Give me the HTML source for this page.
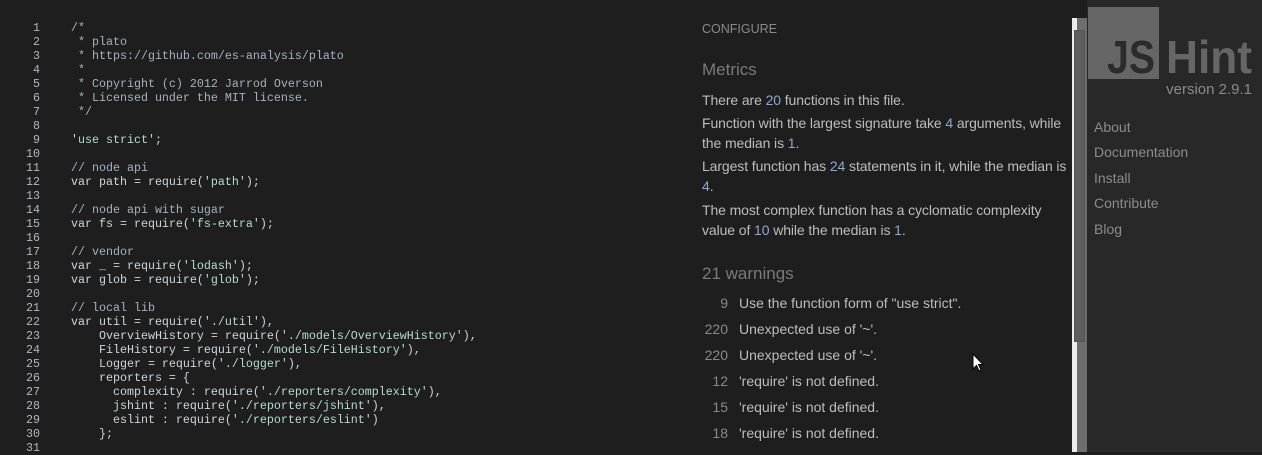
<!DOCTYPE html>
<html><head><meta charset="utf-8"><style>
*{margin:0;padding:0;box-sizing:border-box}
body{width:1262px;height:452px;overflow:hidden;background:#1e1e1e;position:relative;font-family:"Liberation Sans",sans-serif}
#code{position:absolute;left:0;top:21px;font-family:"Liberation Mono",monospace;font-size:11.67px;line-height:14px;color:#cdd6dc;white-space:pre}
#code .n{display:inline-block;width:40px;text-align:right;color:#b0b8c0;margin-right:31px}
.c{color:#a4b2c2}.s{color:#b4dcd2}
#right{position:absolute;left:702px;top:0;width:370px;color:#bdbdbd;font-size:14px}
.cfg{position:absolute;top:22px;font-size:12.5px;color:#8a8a8a}
.h{position:absolute;font-size:17px;color:#7a7a7a}
.p{position:absolute;line-height:20px;width:372px;letter-spacing:-0.1px}
.b{color:#8fa8d0}
.w{position:absolute;left:0;line-height:20px}
.w span{display:inline-block;width:26px;text-align:right;color:#8a8a8a;margin-right:11px}
#sb1{position:absolute;left:1072px;top:18px;width:5px;height:434px;background:#ececec}
#sb2{position:absolute;left:1077px;top:18px;width:10px;height:434px;background:#6e6e6e}
#th{position:absolute;left:1074px;top:30px;width:11px;height:312px;background:#5e5e5e;border:1px solid #555}
#side{position:absolute;left:1087px;top:0;width:175px;height:452px;background:#282828}
.ver{position:absolute;right:10px;top:81px;font-size:15px;color:#8a8a8a}
.nav{position:absolute;left:1094px;font-size:14px;color:#8c8c8c}
</style></head><body>
<div id="code"><span class="n">1</span><span class="c">/*</span>
<span class="n">2</span><span class="c"> * plato</span>
<span class="n">3</span><span class="c"> * https://github.com/es-analysis/plato</span>
<span class="n">4</span><span class="c"> *</span>
<span class="n">5</span><span class="c"> * Copyright (c) 2012 Jarrod Overson</span>
<span class="n">6</span><span class="c"> * Licensed under the MIT license.</span>
<span class="n">7</span><span class="c"> */</span>
<span class="n">8</span>
<span class="n">9</span><span class="s">'use strict'</span>;
<span class="n">10</span>
<span class="n">11</span><span class="c">// node api</span>
<span class="n">12</span>var path = require(<span class="s">'path'</span>);
<span class="n">13</span>
<span class="n">14</span><span class="c">// node api with sugar</span>
<span class="n">15</span>var fs = require(<span class="s">'fs-extra'</span>);
<span class="n">16</span>
<span class="n">17</span><span class="c">// vendor</span>
<span class="n">18</span>var _ = require(<span class="s">'lodash'</span>);
<span class="n">19</span>var glob = require(<span class="s">'glob'</span>);
<span class="n">20</span>
<span class="n">21</span><span class="c">// local lib</span>
<span class="n">22</span>var util = require(<span class="s">'./util'</span>),
<span class="n">23</span>    OverviewHistory = require(<span class="s">'./models/OverviewHistory'</span>),
<span class="n">24</span>    FileHistory = require(<span class="s">'./models/FileHistory'</span>),
<span class="n">25</span>    Logger = require(<span class="s">'./logger'</span>),
<span class="n">26</span>    reporters = {
<span class="n">27</span>      complexity : require(<span class="s">'./reporters/complexity'</span>),
<span class="n">28</span>      jshint : require(<span class="s">'./reporters/jshint'</span>),
<span class="n">29</span>      eslint : require(<span class="s">'./reporters/eslint'</span>)
<span class="n">30</span>    };
<span class="n">31</span></div>
<div id="right">
<div class="cfg">CONFIGURE</div>
<div class="h" style="top:60px">Metrics</div>
<div class="p" style="top:90px">There are <span class="b">20</span> functions in this file.</div>
<div class="p" style="top:113px">Function with the largest signature take <span class="b">4</span> arguments, while the median is <span class="b">1</span>.</div>
<div class="p" style="top:156px">Largest function has <span class="b">24</span> statements in it, while the median is <span class="b">4</span>.</div>
<div class="p" style="top:200px">The most complex function has a cyclomatic complexity value of <span class="b">10</span> while the median is <span class="b">1</span>.</div>
<div class="h" style="top:264px">21 warnings</div>
<div class="w" style="top:293px"><span>9</span>Use the function form of "use strict".</div>
<div class="w" style="top:319px"><span>220</span>Unexpected use of '~'.</div>
<div class="w" style="top:345px"><span>220</span>Unexpected use of '~'.</div>
<div class="w" style="top:371px"><span>12</span>'require' is not defined.</div>
<div class="w" style="top:397px"><span>15</span>'require' is not defined.</div>
<div class="w" style="top:423px"><span>18</span>'require' is not defined.</div>
</div>
<svg style="position:absolute;left:972px;top:353px" width="12" height="20" viewBox="0 0 12 20"><path d="M1 1 L1 16 L4.5 12.5 L7 18 L9 17 L6.5 11.5 L11 11.5 Z" fill="#fff" stroke="#000" stroke-width="1"/></svg>
<div id="sb1"></div><div id="sb2"></div><div id="th"></div>
<div id="side"></div>
<svg style="position:absolute;left:1087px;top:0" width="175" height="82" viewBox="0 0 175 82">
<rect x="1" y="7" width="71" height="72" fill="#666"/>
<text x="20" y="73" font-family="Liberation Sans" font-weight="bold" font-size="46" fill="#2b2b2b" textLength="48" lengthAdjust="spacingAndGlyphs">JS</text>
<text x="79" y="73" font-family="Liberation Sans" font-weight="bold" font-size="46" fill="#666" textLength="86" lengthAdjust="spacingAndGlyphs">Hint</text>
</svg>
<div class="ver">version 2.9.1</div>
<div class="nav" style="top:119px">About</div>
<div class="nav" style="top:144px">Documentation</div>
<div class="nav" style="top:170px">Install</div>
<div class="nav" style="top:195px">Contribute</div>
<div class="nav" style="top:221px">Blog</div>
</body></html>
